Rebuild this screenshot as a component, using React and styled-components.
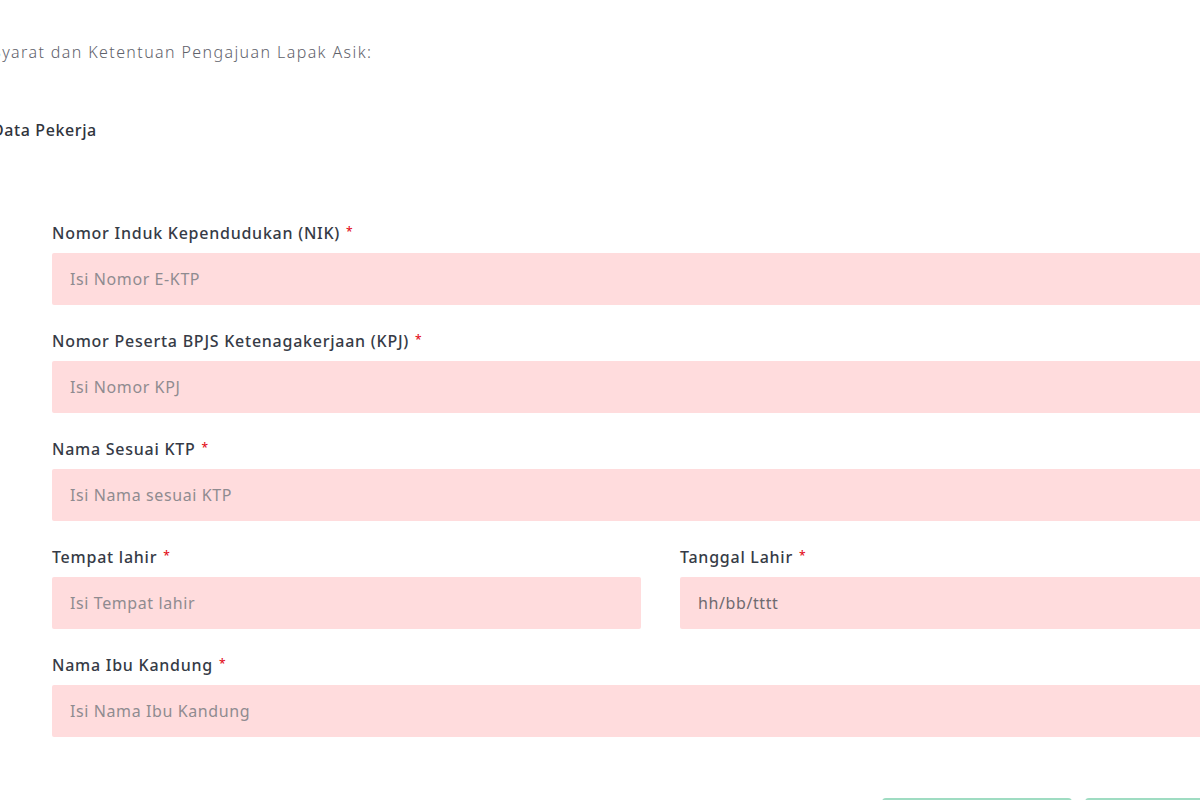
import React from "react";
import styled, { createGlobalStyle } from "styled-components";

const GlobalStyle = createGlobalStyle`
  html, body {
    margin: 0;
    padding: 0;
    background: #ffffff;
    overflow: hidden;
  }
  body {
    font-family: "Noto Sans", "Open Sans", sans-serif;
  }
`;

const Page = styled.div`
  margin-left: -8px;
  width: 1320px;
  padding-top: 40px;
`;

const Intro = styled.p`
  margin: 0;
  font-size: 16px;
  line-height: 24px;
  letter-spacing: 1.4px;
  font-weight: 300;
  color: #5f626b;
`;

const SectionTitle = styled.h3`
  margin: 54px 0 0;
  font-size: 16px;
  line-height: 24px;
  letter-spacing: 0.6px;
  font-weight: 500;
  color: #30343c;
`;

const Form = styled.form`
  margin: 81px 0 0 60px;
  width: 1217px;
  display: grid;
  grid-template-columns: 1fr 1fr;
  column-gap: 39px;
  row-gap: 26px;
`;

const Field = styled.div`
  display: flex;
  flex-direction: column;
  gap: 10px;
  grid-column: ${(p) => (p.$half ? "auto" : "1 / -1")};
`;

const Label = styled.label`
  height: 20px;
  font-size: 16px;
  line-height: 20px;
  letter-spacing: 0.75px;
  font-weight: 500;
  color: #363b46;

  span {
    color: #e3101b;
    margin-left: 6px;
    font-size: 12px;
    line-height: 0;
    vertical-align: 3px;
  }
`;

const Input = styled.input`
  box-sizing: border-box;
  height: 52px;
  width: 100%;
  border: 0;
  border-radius: 2px;
  background: #ffdcdd;
  padding: 0 18px;
  font-family: inherit;
  font-size: 16px;
  letter-spacing: 0.6px;
  color: #444;
  outline: none;

  &::placeholder {
    color: ${(p) => (p.$dark ? "#6e6a70" : "#8f8b90")};
  }
`;

const Actions = styled.div`
  display: flex;
  gap: 13px;
  margin: 61px 0 0 890px;
`;

const Button = styled.button`
  width: 190px;
  height: 44px;
  border: 2px solid #9fdcc2;
  border-radius: 4px;
  background: #ffffff;
  font-family: inherit;
  font-size: 15px;
`;

const fields = [
  { label: "Nomor Induk Kependudukan (NIK)", placeholder: "Isi Nomor E-KTP" },
  { label: "Nomor Peserta BPJS Ketenagakerjaan (KPJ)", placeholder: "Isi Nomor KPJ" },
  { label: "Nama Sesuai KTP", placeholder: "Isi Nama sesuai KTP" },
  { label: "Tempat lahir", placeholder: "Isi Tempat lahir", half: true },
  { label: "Tanggal Lahir", placeholder: "hh/bb/tttt", half: true, dark: true },
  { label: "Nama Ibu Kandung", placeholder: "Isi Nama Ibu Kandung" },
];

export default function App() {
  return (
    <>
      <GlobalStyle />
      <Page>
        <Intro>Syarat dan Ketentuan Pengajuan Lapak Asik:</Intro>
        <SectionTitle>Data Pekerja</SectionTitle>
        <Form>
          {fields.map((f) => (
            <Field key={f.label} $half={f.half}>
              <Label>
                {f.label}
                <span>*</span>
              </Label>
              <Input placeholder={f.placeholder} $dark={f.dark} />
            </Field>
          ))}
        </Form>
        <Actions>
          <Button type="button" />
          <Button type="button" />
        </Actions>
      </Page>
    </>
  );
}
